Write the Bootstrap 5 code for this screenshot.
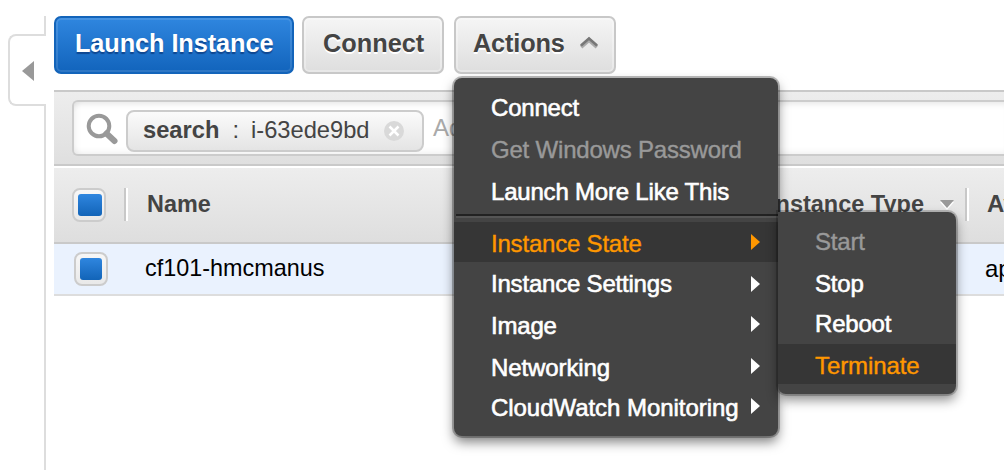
<!DOCTYPE html>
<html lang="en">
<head>
<meta charset="utf-8">
<meta name="viewport" content="width=device-width, initial-scale=1">
<title>Instances</title>
<link href="https://cdn.jsdelivr.net/npm/bootstrap@5.3.0/dist/css/bootstrap.min.css" rel="stylesheet">
<style>
body{font-family:"Liberation Sans",Arial,sans-serif;font-size:24px;color:#444;background:#fff;width:1004px;height:470px;overflow:hidden}
.rail{width:54px;height:470px;padding:16px 8px 0}
.rail .seg{width:2px;margin-left:36px;background:#ddd}
.rail .tab{width:38px;height:72px;border:2px solid #ddd;border-right:0;border-radius:8px 0 0 8px;padding:2px 0 0 12px}
.main{width:950px}
.tools{height:90px;padding-top:16px}
.cbtn{display:flex;height:58px;border:2px solid #c8c8c8;border-radius:7px;background:linear-gradient(#f5f5f5,#dedede);color:#444;font-weight:700;font-size:25.3px;line-height:50px;padding:0 0 0 18px;white-space:nowrap;text-shadow:0 2px 0 #fff;box-shadow:inset 0 0 0 2px rgba(255,255,255,.3)}
.cbtn.go{border-color:#1364ba;background:linear-gradient(#2f86df,#1264bc);color:#fff;text-shadow:0 2px 1px rgba(0,30,90,.5);box-shadow:inset 0 0 0 2px rgba(255,255,255,.12);width:240px;padding-left:19px;letter-spacing:-.08px}
.filter{height:76px;border-top:2px solid #c9c9c9;border-bottom:2px solid #c9c9c9;background:linear-gradient(#ededed,#dfdfdf);padding:8px 0 8px 18px}
.field{height:56px;border:2px solid #ccc;border-right:0;border-radius:6px 0 0 6px;background:#fff;box-shadow:inset 0 7px 6px -5px rgba(0,0,0,.1),inset 0 -7px 6px -5px rgba(0,0,0,.06),inset 7px 0 6px -5px rgba(0,0,0,.06);padding-left:10px}
.token{width:298px;height:42px;border:2px solid #ccc;border-radius:8px;background:linear-gradient(#fbfbfb,#e4e4e4);margin:6px 0 0 8px;padding-left:15px;line-height:37px;white-space:pre;font-size:23.7px}
.thead-row{height:76px;margin-top:2px;background:linear-gradient(#ededed,#dedede);border-bottom:2px solid #c9c9c9;font-weight:700;line-height:72px;white-space:nowrap}
.tbody-row{height:52px;background:#eaf2fe;border-bottom:2px solid #ddd;color:#000;line-height:49px}
.check{width:34px;height:34px;border:2px solid #ccc;border-radius:8px;background:linear-gradient(#f7f7f7,#e9e9e9);padding:4px}
.check i{display:block;width:24px;height:22px;border-radius:3px;background:linear-gradient(#2f86df,#1264b8)}
.check i.narrow{width:22px}
.vsep{width:4px;height:33px;border-left:2px solid #c8c8c8;border-right:2px solid #fff;margin-top:20px}
.pop{position:absolute;background:#444;background-clip:padding-box;border-radius:8px;box-shadow:0 0 0 2px rgba(0,0,0,.26),0 6px 12px rgba(0,0,0,.5);color:#fff}
.m1{left:454px;top:78px;width:324px;height:358px;padding-top:8px}
.m2{left:778px;top:212px;width:178px;height:182px;padding-top:8px;border-radius:0 8px 8px 8px;box-shadow:0 0 0 2px rgba(0,0,0,.2),0 6px 12px rgba(0,0,0,.45)}
.it{height:40px;padding:2px 0 0 37px;line-height:40px;white-space:nowrap;letter-spacing:-.2px;-webkit-text-stroke:.6px currentColor}
.it svg{margin:10px 18px 0 0}
.gap{margin-bottom:2px}
.off{color:#999;-webkit-text-stroke-width:.4px}
.on{background:#363636;color:#ff9700;-webkit-text-stroke-width:.4px}
.rule{height:4px;margin:4px 0 4px 2px;border-top:2px solid #222;border-bottom:2px solid #555}
</style>
</head>
<body>
<div class="d-flex">
  <aside class="rail flex-shrink-0 d-flex flex-column">
    <div class="seg" style="height:18px"></div>
    <div class="tab d-flex align-items-center"><svg width="12" height="20"><path d="M12 0V20L0 10Z" fill="#999"/></svg></div>
    <div class="seg flex-grow-1"></div>
  </aside>
  <main class="main flex-shrink-0">
    <div class="tools d-flex">
      <button class="cbtn go"><span>Launch Instance</span></button>
      <button class="cbtn ms-2" style="width:142px;padding-left:19px"><span>Connect</span></button>
      <button class="cbtn" style="width:162px;margin-left:10px;padding-left:17px;letter-spacing:-.15px"><span>Actions</span><svg width="18" height="14" style="margin:18px 0 0 15px"><path d="M1 11L9 4L17 11" fill="none" stroke="#aaa" stroke-width="4"/><path d="M1 9.5L9 2.5L17 9.5" fill="none" stroke="#777" stroke-width="2.5"/></svg></button>
    </div>
    <div class="filter">
      <div class="field d-flex align-items-center">
        <svg width="34" height="36" viewBox="0 0 34 36"><circle cx="15" cy="16" r="10.3" fill="none" stroke="#999" stroke-width="4"/><path d="M22.5 23.5L30.5 31" stroke="#999" stroke-width="6" stroke-linecap="round"/></svg>
        <div class="token d-flex"><b>search</b><span style="margin-left:13px">:</span><span style="margin-left:12px">i-63ede9bd</span><svg width="22" height="22" style="margin:8px 0 0 13px"><circle cx="11" cy="11" r="10" fill="#d9d9d9"/><path d="M6.5 6.5L15.5 15.5M15.5 6.5L6.5 15.5" stroke="#fff" stroke-width="2.5"/></svg></div>
        <span style="color:#aaa;margin:0 0 0 9px">Add filter</span>
      </div>
    </div>
    <div class="thead-row d-flex">
      <div class="check" style="margin:20px 0 0 18px"><i></i></div>
      <div class="vsep" style="margin-left:18px"></div>
      <span style="margin-left:19px;width:622px;font-size:23.4px">Name</span>
      <span style="width:155px;font-size:23.5px">Instance Type</span>
      <svg width="14" height="10" style="margin:32px 0 0 16px"><path d="M0 2H14L7 10Z" fill="#fff"/><path d="M0 0H14L7 8Z" fill="#999"/></svg>
      <div class="vsep" style="margin-left:11px"></div>
      <span style="margin-left:18px;width:17px;overflow:hidden">Availability Zone</span>
    </div>
    <div class="tbody-row d-flex">
      <div class="check" style="margin:8px 0 0 20px"><i class="narrow"></i></div>
      <span style="margin-left:37px;width:840px;font-size:23.4px">cf101-hmcmanus</span>
      <span style="width:19px;overflow:hidden;white-space:nowrap">ap-southeast</span>
    </div>
  </main>
</div>
<div class="pop m1">
  <div class="it gap">Connect</div>
  <div class="it gap off">Get Windows Password</div>
  <div class="it gap">Launch More Like This</div>
  <div class="rule"></div>
  <div class="it on d-flex justify-content-between"><span>Instance State</span><svg width="9" height="16"><path d="M0 0V16L9 8Z" fill="currentColor" stroke="none"/></svg></div>
  <div class="it gap d-flex justify-content-between"><span>Instance Settings</span><svg width="9" height="16" style="margin-top:12px"><path d="M0 0V16L9 8Z" fill="currentColor" stroke="none"/></svg></div>
  <div class="it gap d-flex justify-content-between"><span>Image</span><svg width="9" height="16"><path d="M0 0V16L9 8Z" fill="currentColor" stroke="none"/></svg></div>
  <div class="it d-flex justify-content-between"><span style="letter-spacing:-.1px">Networking</span><svg width="9" height="16"><path d="M0 0V16L9 8Z" fill="currentColor" stroke="none"/></svg></div>
  <div class="it d-flex justify-content-between"><span style="letter-spacing:-.05px">CloudWatch Monitoring</span><svg width="9" height="16"><path d="M0 0V16L9 8Z" fill="currentColor" stroke="none"/></svg></div>
</div>
<div class="pop m2">
  <div class="it gap off">Start</div>
  <div class="it">Stop</div>
  <div class="it gap">Reboot</div>
  <div class="it on" style="letter-spacing:-.1px">Terminate</div>
</div>
<script src="https://cdn.jsdelivr.net/npm/bootstrap@5.3.0/dist/js/bootstrap.bundle.min.js"></script>
</body>
</html>
